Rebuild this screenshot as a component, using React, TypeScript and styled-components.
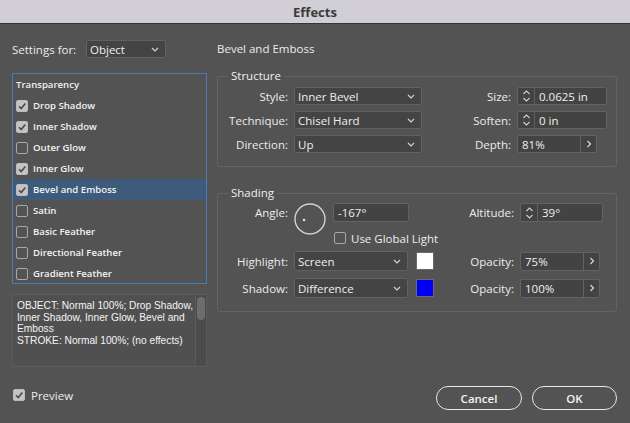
import React from "react";
import styled, { createGlobalStyle } from "styled-components";

const GlobalStyle = createGlobalStyle`
  * { box-sizing: border-box; }
  html, body { margin: 0; padding: 0; background: #535353; }
  body {
    font-family: "Open Sans", "DejaVu Sans", sans-serif;
    color: #ececec;
    font-size: 11.5px;
    font-weight: 500;
  }
`;

const Window = styled.div`
  width: 630px;
  height: 423px;
  background: #535353;
  display: flex;
  flex-direction: column;
  overflow: hidden;
`;

const TitleBar = styled.div`
  flex: none;
  height: 24px;
  background: #d2ced6;
  border-bottom: 1px solid #353535;
  display: flex;
  align-items: center;
  justify-content: center;
  font-size: 13px;
  font-weight: 700;
  color: #3a3a3a;
`;

const Body = styled.div`
  display: grid;
  grid-template-columns: 195px 400px;
  column-gap: 10px;
  padding: 16px 13px 0 12px;
`;

const Column = styled.div`
  display: flex;
  flex-direction: column;
  min-width: 0;
`;

const SettingsRow = styled.div`
  height: 18px;
  display: flex;
  align-items: center;
  gap: 6px;
  white-space: nowrap;
`;

const SettingsLabel = styled.span`
  width: 68px;
`;

const Heading = styled.div`
  height: 18px;
  line-height: 18px;
`;

const SelectBox = styled.div<{ $w: number; $h?: number }>`
  flex: none;
  width: ${(p) => p.$w}px;
  height: ${(p) => p.$h ?? 18}px;
  background: #444444;
  border: 1px solid #616161;
  border-radius: 2px;
  display: flex;
  align-items: center;
  justify-content: space-between;
  padding: 0 6px 0 3px;
  color: #efefef;
  white-space: nowrap;
`;

const EffectList = styled.div`
  margin-top: 15px;
  height: 211px;
  border: 1px solid #4a7db3;
  overflow: hidden;
`;

const ListHeader = styled.div`
  height: 21px;
  display: flex;
  align-items: center;
  padding-left: 3px;
  font-size: 9.6px;
  font-weight: 600;
  color: #efefef;
`;

const ListItem = styled.div<{ $selected?: boolean }>`
  height: 21px;
  display: flex;
  align-items: center;
  gap: 5px;
  padding-left: 3px;
  font-size: 9.6px;
  font-weight: 600;
  color: #f2f2f2;
  background: ${(p) => (p.$selected ? "#3e5b7b" : "transparent")};
`;

const Box = styled.span<{ $checked: boolean }>`
  flex: none;
  width: 12px;
  height: 12px;
  border-radius: 2px;
  border: 1px solid ${(p) => (p.$checked ? "#bcbcbc" : "#a8a8a8")};
  background: ${(p) => (p.$checked ? "#c4c4c4" : "transparent")};
  display: flex;
  align-items: center;
  justify-content: center;
`;

const Summary = styled.div`
  margin-top: 10px;
  height: 73px;
  display: flex;
  background: #505050;
  border: 1px solid #5c5c5c;
`;

const SummaryText = styled.div`
  flex: 1;
  min-width: 0;
  overflow: hidden;
  padding: 5px 4px;
  font-family: "Liberation Sans", Arial, sans-serif;
  font-size: 10.2px;
  font-weight: 400;
  line-height: 11.5px;
  color: #f4f4f4;
  white-space: nowrap;
`;

const ScrollTrack = styled.div`
  flex: none;
  width: 11px;
  padding: 2px 1px;
  border-left: 1px solid #5a5a5a;
  background: #4b4b4b;
`;

const ScrollThumb = styled.div`
  height: 23px;
  border-radius: 5px;
  background: #6d6d6d;
`;

const Group = styled.fieldset<{ $mt: number; $pb: number; $pt: number }>`
  margin: ${(p) => p.$mt}px 0 0;
  padding: ${(p) => p.$pt}px 0 ${(p) => p.$pb}px;
  border: 1px solid #636363;
  border-radius: 3px;
  min-width: 0;
`;

const Legend = styled.legend`
  margin-left: 10px;
  padding: 0 3px;
  line-height: 16px;
  font-size: 11.5px;
  color: #efefef;
`;

const StructureGrid = styled.div`
  display: grid;
  grid-template-columns: 70px 128px 1fr auto 90px;
  grid-auto-rows: 18px;
  row-gap: 6px;
  column-gap: 6px;
  align-items: center;
  padding-right: 9px;
`;

const ShadingGrid = styled.div`
  display: grid;
  grid-template-columns: 70px auto 1fr auto 83px;
  row-gap: 7px;
  column-gap: 6px;
  align-items: center;
  padding-right: 13px;
`;

const Label = styled.span<{ $right?: boolean; $top?: boolean }>`
  text-align: right;
  white-space: nowrap;
  ${(p) => (p.$right ? "grid-column: 4;" : "")}
  ${(p) => (p.$top ? "align-self: start; line-height: 20px;" : "")}
`;

const Field = styled.div<{ $w: number; $h?: number; $top?: boolean }>`
  width: ${(p) => p.$w}px;
  height: ${(p) => p.$h ?? 18}px;
  display: flex;
  align-items: stretch;
  background: #434343;
  border: 1px solid #626262;
  border-radius: 2px;
  ${(p) => (p.$top ? "align-self: start;" : "")}
`;

const FieldText = styled.span`
  flex: 1;
  display: flex;
  align-items: center;
  padding-left: 4px;
  color: #f0f0f0;
  white-space: nowrap;
`;

const SpinButton = styled.span`
  flex: none;
  width: 17px;
  border-right: 1px solid #626262;
  display: flex;
  align-items: center;
  justify-content: center;
`;

const StepButton = styled.span`
  flex: none;
  width: 16px;
  border-left: 1px solid #626262;
  display: flex;
  align-items: center;
  justify-content: center;
`;

const AngleCluster = styled.div`
  display: flex;
  gap: 7px;
  align-items: flex-start;
`;

const AngleStack = styled.div`
  display: flex;
  flex-direction: column;
  gap: 10px;
`;

const CheckRow = styled.label`
  display: flex;
  align-items: center;
  gap: 5px;
  white-space: nowrap;
  padding-left: 1px;
  height: 12px;
`;

const ColorRow = styled.div`
  display: flex;
  align-items: center;
  gap: 8px;
`;

const Swatch = styled.span<{ $color: string }>`
  width: 18px;
  height: 18px;
  background: ${(p) => p.$color};
  border: 1px solid #6a6a6a;
`;

const Footer = styled.div`
  margin-top: auto;
  padding: 0 13px 13px;
  display: flex;
  align-items: center;
  justify-content: space-between;
`;

const PreviewRow = styled(CheckRow)`
  gap: 6px;
  height: 18px;
  padding: 0 0 6px;
  font-size: 11.5px;
`;

const Buttons = styled.div`
  display: flex;
  gap: 10px;
`;

const PillButton = styled.button<{ $w: number }>`
  width: ${(p) => p.$w}px;
  height: 24px;
  border-radius: 12px;
  border: 1.5px solid #e8e8e8;
  background: transparent;
  color: #f3f3f3;
  font-family: inherit;
  font-size: 11.5px;
  font-weight: 600;
  padding: 0;
`;

const Chevron = () => (
  <svg width="8" height="5" viewBox="0 0 8 5">
    <path d="M1 1 L4 4 L7 1" fill="none" stroke="#d2d2d2" strokeWidth="1.2" />
  </svg>
);

const SpinIcon = () => (
  <svg width="9" height="14" viewBox="0 0 9 14">
    <path d="M1.5 5 L4.5 2 L7.5 5" fill="none" stroke="#d0d0d0" strokeWidth="1.1" />
    <path d="M1.5 9 L4.5 12 L7.5 9" fill="none" stroke="#d0d0d0" strokeWidth="1.1" />
  </svg>
);

const RightArrow = () => (
  <svg width="6" height="8" viewBox="0 0 6 8">
    <path d="M1.5 1 L4.5 4 L1.5 7" fill="none" stroke="#d8d8d8" strokeWidth="1.2" />
  </svg>
);

const Check = ({ checked }: { checked: boolean }) => (
  <Box $checked={checked}>
    {checked && (
      <svg width="10" height="10" viewBox="0 0 10 10">
        <path d="M2 5.3 L4.2 7.5 L8.3 2.4" fill="none" stroke="#4a4a4a" strokeWidth="1.6" />
      </svg>
    )}
  </Box>
);

const Select = ({ value, w, h }: { value: string; w: number; h?: number }) => (
  <SelectBox $w={w} $h={h}>
    <span>{value}</span>
    <Chevron />
  </SelectBox>
);

const SpinField = ({ value, w, h, top }: { value: string; w: number; h?: number; top?: boolean }) => (
  <Field $w={w} $h={h} $top={top}>
    <SpinButton>
      <SpinIcon />
    </SpinButton>
    <FieldText>{value}</FieldText>
  </Field>
);

const StepField = ({ value, w, h }: { value: string; w: number; h?: number }) => (
  <Field $w={w} $h={h}>
    <FieldText>{value}</FieldText>
    <StepButton>
      <RightArrow />
    </StepButton>
  </Field>
);

const effects = [
  { name: "Drop Shadow", checked: true },
  { name: "Inner Shadow", checked: true },
  { name: "Outer Glow", checked: false },
  { name: "Inner Glow", checked: true },
  { name: "Bevel and Emboss", checked: true, selected: true },
  { name: "Satin", checked: false },
  { name: "Basic Feather", checked: false },
  { name: "Directional Feather", checked: false },
  { name: "Gradient Feather", checked: false },
];

const summary = [
  "OBJECT: Normal 100%; Drop Shadow,",
  "Inner Shadow, Inner Glow, Bevel and",
  "Emboss",
  "STROKE: Normal 100%; (no effects)",
];

const App: React.FC = () => {
  return (
    <Window>
      <GlobalStyle />
      <TitleBar>Effects</TitleBar>
      <Body>
        <Column>
          <SettingsRow>
            <SettingsLabel>Settings for:</SettingsLabel>
            <Select value="Object" w={80} />
          </SettingsRow>
          <EffectList>
            <ListHeader>Transparency</ListHeader>
            {effects.map((e) => (
              <ListItem key={e.name} $selected={e.selected}>
                <Check checked={e.checked} />
                {e.name}
              </ListItem>
            ))}
          </EffectList>
          <Summary>
            <SummaryText>
              {summary.map((line) => (
                <div key={line}>{line}</div>
              ))}
            </SummaryText>
            <ScrollTrack>
              <ScrollThumb />
            </ScrollTrack>
          </Summary>
        </Column>

        <Column>
          <Heading>Bevel and Emboss</Heading>
          <Group $mt={10} $pt={3} $pb={13}>
            <Legend>Structure</Legend>
            <StructureGrid>
              <Label>Style:</Label>
              <Select value="Inner Bevel" w={128} />
              <Label $right>Size:</Label>
              <SpinField value="0.0625 in" w={90} />

              <Label>Technique:</Label>
              <Select value="Chisel Hard" w={128} />
              <Label $right>Soften:</Label>
              <SpinField value="0 in" w={90} />

              <Label>Direction:</Label>
              <Select value="Up" w={128} />
              <Label $right>Depth:</Label>
              <StepField value="81%" w={80} />
            </StructureGrid>
          </Group>

          <Group $mt={18} $pt={2} $pb={13}>
            <Legend>Shading</Legend>
            <ShadingGrid>
              <Label $top>Angle:</Label>
              <AngleCluster>
                <svg width="32" height="32" viewBox="0 0 32 32">
                  <circle cx="16" cy="16" r="15" fill="none" stroke="#d4d4d4" strokeWidth="1.4" />
                  <circle cx="10" cy="17" r="1.3" fill="#e0e0e0" />
                </svg>
                <AngleStack>
                  <Field $w={76} $h={19}>
                    <FieldText>-167°</FieldText>
                  </Field>
                  <CheckRow>
                    <Check checked={false} />
                    Use Global Light
                  </CheckRow>
                </AngleStack>
              </AngleCluster>
              <Label $right $top>Altitude:</Label>
              <SpinField value="39°" w={83} h={19} top />

              <Label>Highlight:</Label>
              <ColorRow>
                <Select value="Screen" w={114} h={20} />
                <Swatch $color="#ffffff" />
              </ColorRow>
              <Label $right>Opacity:</Label>
              <StepField value="75%" w={80} h={19} />

              <Label>Shadow:</Label>
              <ColorRow>
                <Select value="Difference" w={114} h={20} />
                <Swatch $color="#0000f5" />
              </ColorRow>
              <Label $right>Opacity:</Label>
              <StepField value="100%" w={80} h={19} />
            </ShadingGrid>
          </Group>
        </Column>
      </Body>

      <Footer>
        <PreviewRow>
          <Check checked />
          Preview
        </PreviewRow>
        <Buttons>
          <PillButton $w={86}>Cancel</PillButton>
          <PillButton $w={85}>OK</PillButton>
        </Buttons>
      </Footer>
    </Window>
  );
};

export default App;
